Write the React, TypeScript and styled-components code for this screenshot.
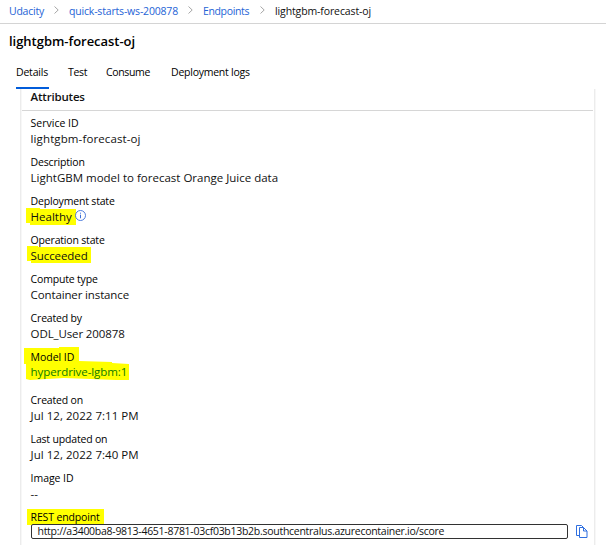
import React from 'react';
import styled, { createGlobalStyle, css } from 'styled-components';

const GlobalStyle = createGlobalStyle`
  *, *::before, *::after { box-sizing: border-box; }
  body {
    margin: 0;
    background: #fff;
    color: #111;
    font-family: "Open Sans", "Noto Sans", sans-serif;
    overflow: hidden;
  }
`;

const Page = styled.div`
  width: 606px;
  height: 555px;
  display: flex;
  flex-direction: column;
  background: #fff;
`;

const Tracked = styled.span<{ $track?: number }>`
  letter-spacing: ${({ $track = 0 }) => $track}px;
  white-space: nowrap;
`;

const Breadcrumbs = styled.nav`
  height: 24px;
  flex: none;
  display: flex;
  align-items: center;
  padding: 0 0 2px 9px;
  border-bottom: 1px solid #d4d4d4;
  font-size: 10.5px;
  line-height: 16px;
`;

const Crumb = styled.a<{ $width: number; $current?: boolean }>`
  width: ${({ $width }) => $width}px;
  color: ${({ $current }) => ($current ? '#111' : '#2563d6')};
  text-decoration: none;
`;

const Separator = styled.svg`
  width: 5px;
  height: 8px;
  margin: 0 10px 2px 10px;
  flex: none;
  fill: none;
  stroke: #a6a6a6;
  stroke-width: 1;
`;

const Title = styled.h1`
  margin: 0;
  height: 36px;
  flex: none;
  padding: 7px 0 0 9px;
  font-size: 13px;
  font-weight: 600;
  line-height: 20px;
  color: #000;
`;

const Tabs = styled.div`
  display: flex;
  flex: none;
  height: 29px;
  padding-left: 16px;
`;

const Tab = styled.div<{ $width: number; $gap: number; $active?: boolean }>`
  width: ${({ $width }) => $width}px;
  margin-right: ${({ $gap }) => $gap}px;
  padding-top: 4px;
  border-bottom: 2px solid ${({ $active }) => ($active ? '#015cda' : 'transparent')};
  font-size: 10.5px;
  line-height: 16px;
  color: #000;
`;

const Panel = styled.section`
  width: 575px;
  height: 456px;
  flex: none;
  margin-left: 20px;
  border: solid #ececec;
  border-width: 0 1px;
  box-shadow: inset 1px 0 0 #f7f7f7, 1px 0 0 #f7f7f7;
`;

const PanelHeading = styled.h2`
  margin: 0 1px 4px;
  height: 22px;
  padding-left: 8.6px;
  border-bottom: 1px solid #d6d6d6;
  font-size: 11.5px;
  font-weight: 600;
  line-height: 16px;
`;

const Attribute = styled.div<{ $gapAfter?: number }>`
  position: relative;
  isolation: isolate;
  height: 32px;
  margin-bottom: ${({ $gapAfter = 7 }) => $gapAfter}px;
  padding-left: 9.6px;
`;

const Label = styled.div`
  font-size: 10.5px;
  line-height: 16px;
  color: #000;
`;

const Value = styled.div<{ $link?: boolean }>`
  display: flex;
  align-items: center;
  margin-top: ${({ $link }) => ($link ? -1 : 0)}px;
  font-size: 11.5px;
  line-height: 16px;
  color: ${({ $link }) => ($link ? '#0d7a00' : '#111')};
`;

const markerShapes = {
  healthy: css`
    left: 5px; top: 15px; width: 50px; height: 17px;
    clip-path: polygon(0 0, 14px 0, 14px 1px, 50px 1px, 50px 17px, 4px 17px, 4px 15px, 0 15px);
  `,
  succeeded: css`
    left: 6px; top: 14px; width: 64px; height: 17px;
    clip-path: polygon(0 0, 11px 0, 11px 1px, 64px 1px, 64px 17px, 4px 17px, 4px 15px, 0 15px);
  `,
  model: css`
    left: 3px; top: -2px; width: 106px; height: 33px;
    clip-path: polygon(0 1px, 35px 1px, 35px 0, 55px 0, 55px 14px, 88px 15px, 88px 16px, 105px 17px, 105px 33px, 92px 33px, 40px 31px, 6px 33px, 2px 32px, 2px 17px, 0 17px);
  `,
  rest: css`
    left: 6px; top: 0; width: 77px; height: 16px;
  `,
};

type MarkerShape = keyof typeof markerShapes;

const Marker = styled.span<{ $shape: MarkerShape }>`
  position: absolute;
  z-index: -1;
  background: #ff0;
  ${({ $shape }) => markerShapes[$shape]}
`;

const InfoIcon = styled.svg`
  width: 11px;
  height: 11px;
  margin: -3px 0 0 3.4px;
  fill: none;
  stroke: #3c6fd8;
`;

const EndpointRow = styled.div`
  display: flex;
  align-items: center;
  height: 15px;
  margin: -1px 0 0 0.4px;
`;

const EndpointField = styled.div`
  width: 537px;
  height: 15px;
  padding-left: 5.5px;
  border: 1px solid #323232;
  border-radius: 2px;
  background: #fff;
  font-size: 10.5px;
  line-height: 13px;
  color: #111;
`;

const CopyIcon = styled.svg`
  width: 12px;
  height: 13px;
  margin-left: 8px;
  fill: none;
  stroke: #2f6fe0;
`;

const crumbs = [
  { text: 'Udacity', width: 35, track: -0.23 },
  { text: 'quick-starts-ws-200878', width: 109, track: -0.18 },
  { text: 'Endpoints', width: 47, track: -0.36 },
  { text: 'lightgbm-forecast-oj', width: 97, track: -0.12 },
];

const tabs = [
  { text: 'Details', width: 33, gap: 19, track: -0.2 },
  { text: 'Test', width: 18, gap: 20, track: -0.3 },
  { text: 'Consume', width: 44, gap: 21, track: -0.35 },
  { text: 'Deployment logs', width: 80, gap: 0, track: -0.24 },
];

interface AttributeData {
  label: string;
  value: string;
  labelTrack?: number;
  track?: number;
  marker?: MarkerShape;
  info?: boolean;
  link?: boolean;
  gapAfter?: number;
}

const attributes: AttributeData[] = [
  { label: 'Service ID', labelTrack: 0, value: 'lightgbm-forecast-oj', track: 0.11 },
  { label: 'Description', value: 'LightGBM model to forecast Orange Juice data' },
  { label: 'Deployment state', value: 'Healthy', marker: 'healthy', info: true },
  { label: 'Operation state', value: 'Succeeded', track: -0.09, marker: 'succeeded' },
  { label: 'Compute type', value: 'Container instance', track: -0.13 },
  { label: 'Created by', value: 'ODL_User 200878', track: -0.12 },
  { label: 'Model ID', labelTrack: -0.05, value: 'hyperdrive-lgbm:1', track: -0.08, marker: 'model', link: true, gapAfter: 11 },
  { label: 'Created on', value: 'Jul 12, 2022 7:11 PM', track: 0.03 },
  { label: 'Last updated on', value: 'Jul 12, 2022 7:40 PM', track: 0.03 },
  { label: 'Image ID', labelTrack: -0.05, value: '--' },
];

export default function App() {
  return (
    <Page>
      <GlobalStyle />
      <Breadcrumbs>
        {crumbs.map((c, i) => (
          <React.Fragment key={c.text}>
            {i > 0 && (
              <Separator viewBox="0 0 5 8">
                <path d="M.5.5 4.2 4 .5 7.5" />
              </Separator>
            )}
            <Crumb $width={c.width} $current={i === crumbs.length - 1}>
              <Tracked $track={c.track}>{c.text}</Tracked>
            </Crumb>
          </React.Fragment>
        ))}
      </Breadcrumbs>
      <Title>
        <Tracked $track={-0.03}>lightgbm-forecast-oj</Tracked>
      </Title>
      <Tabs>
        {tabs.map((t, i) => (
          <Tab key={t.text} $width={t.width} $gap={t.gap} $active={i === 0}>
            <Tracked $track={t.track}>{t.text}</Tracked>
          </Tab>
        ))}
      </Tabs>
      <Panel>
        <PanelHeading>
          <Tracked $track={-0.2}>Attributes</Tracked>
        </PanelHeading>
        {attributes.map((a) => (
          <Attribute key={a.label} $gapAfter={a.gapAfter}>
            {a.marker && <Marker $shape={a.marker} />}
            <Label>
              <Tracked $track={a.labelTrack ?? -0.18}>{a.label}</Tracked>
            </Label>
            <Value $link={a.link}>
              <Tracked $track={a.track}>{a.value}</Tracked>
              {a.info && (
                <InfoIcon viewBox="0 0 11 11">
                  <circle cx="5.5" cy="5.5" r="5" strokeWidth=".9" />
                  <path d="M5.5 4.7v3.6M5.5 2.7v1" />
                </InfoIcon>
              )}
            </Value>
          </Attribute>
        ))}
        <Attribute>
          <Marker $shape="rest" />
          <Label>
            <Tracked $track={-0.15}>REST endpoint</Tracked>
          </Label>
          <EndpointRow>
            <EndpointField>
              <Tracked $track={-0.275}>
                http://a3400ba8-9813-4651-8781-03cf03b13b2b.southcentralus.azurecontainer.io/score
              </Tracked>
            </EndpointField>
            <CopyIcon viewBox="0 0 12 13">
              <path d="M3.5 10.5h-3v-10h5l2 2M3.5 2.5h4l3.5 3.5v6.5h-7.5zM7.5 2.5v3.5h3.5" />
            </CopyIcon>
          </EndpointRow>
        </Attribute>
      </Panel>
    </Page>
  );
}
